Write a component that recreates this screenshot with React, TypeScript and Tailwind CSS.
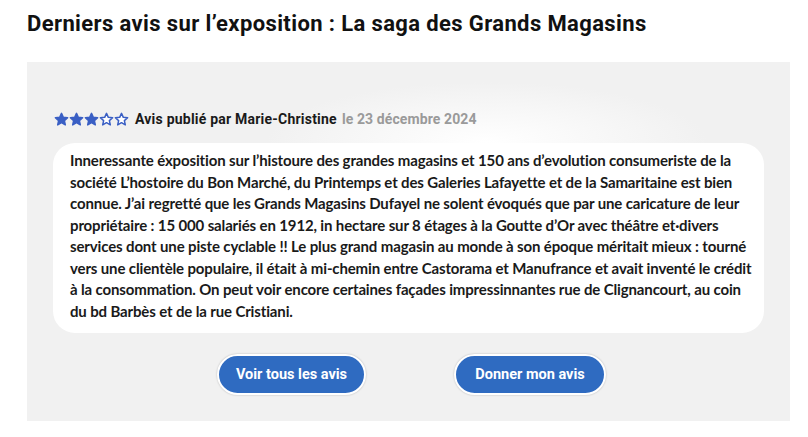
const Star = ({ filled }: { filled: boolean }) => (
	<svg width="15" height="15" viewBox="0 0 24 24" className="block">
		<path
			d="M12 2.2l2.9 6.3 6.9.7-5.2 4.6 1.5 6.8L12 17.1l-6.1 3.5 1.5-6.8L2.2 9.2l6.9-.7z"
			fill={filled ? "#3a5fc4" : "#ffffff"}
			stroke="#3a5fc4"
			strokeWidth="2.4"
			strokeLinejoin="round"
		/>
	</svg>
);

const reviewLines = [
	"Inneressante éxposition sur l’histoure des grandes magasins et 150 ans d’evolution consumeriste de la",
	"société L’hostoire du Bon Marché, du Printemps et des Galeries Lafayette et de la Samaritaine est bien",
	"connue. J’ai regretté que les Grands Magasins Dufayel ne solent évoqués que par une caricature de leur",
	"propriétaire : 15 000 salariés en 1912, in hectare sur 8 étages à la Goutte d’Or avec théâtre et·divers",
	"services dont une piste cyclable !! Le plus grand magasin au monde à son époque méritait mieux : tourné",
	"vers une clientèle populaire, il était à mi-chemin entre Castorama et Manufrance et avait inventé le crédit",
	"à la consommation. On peut voir encore certaines façades impressinnantes rue de Clignancourt, au coin",
	"du bd Barbès et de la rue Cristiani.",
];

export default function App() {
	return (
		<div className="w-[808px] h-[437px] bg-white font-['Roboto',sans-serif]">
			<h1 className="pl-[27px] pt-[10px] h-[62px] text-[22px] leading-[28px] font-bold text-[#111] tracking-[0.38px]">
				Derniers avis sur l’exposition : La saga des Grands Magasins
			</h1>
			<div className="ml-[27px] w-[763px] h-[359px] bg-[radial-gradient(ellipse_220px_60px_at_460px_80px,#ffffff,#f1f1f1)] pt-[49px] px-[26px]">
				<div className="flex items-center h-[17px] ml-[1px]">
					<div className="flex">
						<Star filled />
						<Star filled />
						<Star filled />
						<Star filled={false} />
						<Star filled={false} />
					</div>
					<span className="ml-[6px] text-[14px] font-bold text-[#1a1a1a] tracking-[0.22px]">
						Avis publié par Marie-Christine
					</span>
					<span className="ml-[5px] text-[14px] font-bold text-[#9a9a9a] tracking-[0.1px]">le 23 décembre 2024</span>
				</div>
				<div className="mt-[15px] bg-white rounded-[22px] h-[190px] pl-[17px] pr-[10px] pt-[7px]">
					<div className="text-[15px] leading-[21.5px] font-bold text-[#1a1a1a] font-['Lato',sans-serif] tracking-[-0.14px]">
						{reviewLines.map((line, i) => (
							<div key={i} className="whitespace-nowrap">{line}</div>
						))}
					</div>
				</div>
				<div className="flex justify-center gap-[88px] mt-[21px] pl-[6px]">
					<button className="h-[41px] w-[149px] rounded-full bg-[#2f6bc1] text-white text-[14.5px] font-bold border-2 border-white shadow-[0_0_2px_rgba(0,0,0,0.25)]">
						Voir tous les avis
					</button>
					<button className="h-[41px] w-[152px] rounded-full bg-[#2f6bc1] text-white text-[14.5px] font-bold border-2 border-white shadow-[0_0_2px_rgba(0,0,0,0.25)]">
						Donner mon avis
					</button>
				</div>
			</div>
		</div>
	);
}
